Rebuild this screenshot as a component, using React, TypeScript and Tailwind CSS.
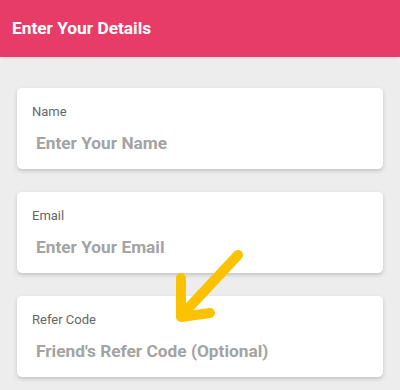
function Field({ label, placeholder }: { label: string; placeholder: string }) {
  return (
    <div className="flex h-[81px] flex-col rounded-[5px] bg-white pl-[15px] pt-4 shadow-[0_2px_4px_rgba(0,0,0,0.18)]">
      <label className="text-[13px] leading-4 text-[#666666]">{label}</label>
      <input
        type="text"
        placeholder={placeholder}
        className="mt-[13px] ml-1 bg-transparent text-[17.3px] font-bold leading-5 text-[#9e9e9e] outline-none placeholder:text-[#a3a3a3]"
      />
    </div>
  )
}

export default function App() {
  return (
    <div className="relative h-[390px] w-[400px] overflow-hidden bg-[#ededed]" style={{ fontFamily: "Roboto, 'Liberation Sans', sans-serif" }}>
      <div className="flex h-[57px] items-center bg-[#e83c68] px-3 shadow-sm">
        <h1 className="text-[17.3px] font-bold text-white">Enter Your Details</h1>
      </div>

      <div className="flex flex-col gap-[23px] px-[17px] pt-[31px]">
        <Field label="Name" placeholder="Enter Your Name" />
        <Field label="Email" placeholder="Enter Your Email" />
        <Field label="Refer Code" placeholder="Friend's Refer Code (Optional)" />
      </div>

      <svg className="pointer-events-none absolute left-0 top-0" width="400" height="390" viewBox="0 0 400 390">
        <path
          d="M238 255 L181 316 M181 278 L181 317 L210 313"
          fill="none"
          stroke="#fcc200"
          strokeWidth="10"
          strokeLinecap="round"
          strokeLinejoin="round"
        />
      </svg>
    </div>
  )
}
